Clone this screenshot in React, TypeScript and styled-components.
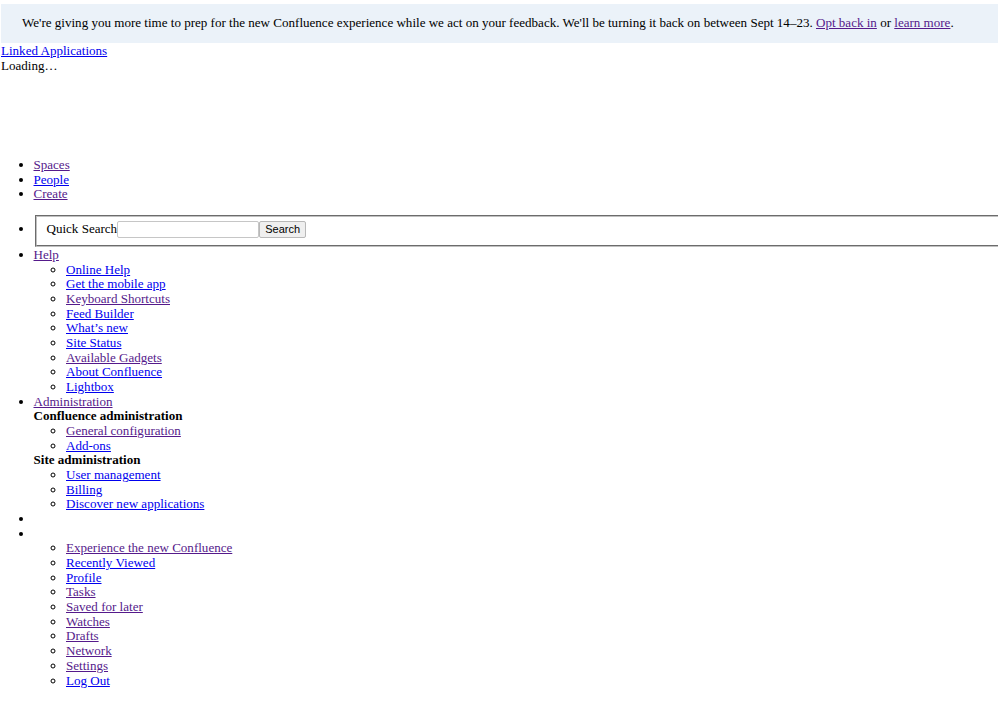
import { createGlobalStyle } from "styled-components";
import styled from "styled-components";

const GlobalStyle = createGlobalStyle`
  html, body {
    margin: 0;
    padding: 0;
    background: #fff;
    overflow-x: hidden;
  }
  body {
    padding-left: 1px;
    font-family: "Liberation Serif", "Times New Roman", serif;
    font-size: 13.05px;
    line-height: 14.67px;
    color: #000;
  }
`;

const Banner = styled.div`
  margin-top: 4px;
  height: 39px;
  padding-left: 21px;
  display: flex;
  align-items: center;
  background: #ebf2f9;
  white-space: nowrap;
`;

const Link = styled.a<{ $visited?: boolean }>`
  color: ${(p) => (p.$visited ? "#551a8b" : "#0000ee")};
  text-decoration: underline;
`;

const AppSwitcher = styled.div`
  margin-top: 1px;
  height: 114px;
`;

const List = styled.ul`
  margin: 0;
  padding: 0 0 0 32.5px;
  list-style: disc;
`;

const SubList = styled.ul`
  margin: 0;
  padding: 0 0 0 32.5px;
  list-style: circle;
`;

const SearchItem = styled.li`
  margin: 13px 0 1px;
`;

const SearchBox = styled.form`
  box-sizing: border-box;
  width: 980px;
  height: 32px;
  margin-left: 1px;
  padding: 0 0 4px 10px;
  display: flex;
  align-items: center;
  border: 2px groove #c0c0c0;
  border-right: 0;
`;

const SearchInput = styled.input`
  box-sizing: border-box;
  width: 142px;
  height: 17px;
  padding: 1px 2px;
  border: 1px solid #c6c6c6;
  border-radius: 2px;
  background: #fff;
`;

const SearchButton = styled.button`
  box-sizing: border-box;
  width: 47px;
  height: 17px;
  padding: 0;
  border: 1px solid #b8b8b8;
  border-radius: 2px;
  background: #efefef;
  color: #000;
  font-family: "Liberation Sans", Arial, sans-serif;
  font-size: 11px;
`;

const SectionTitle = styled.strong`
  display: block;
  font-weight: 700;
`;

type Item = { label: string; visited?: boolean };

const topLinks: Item[] = [
  { label: "Spaces", visited: true },
  { label: "People" },
  { label: "Create", visited: true },
];

const helpLinks: Item[] = [
  { label: "Online Help" },
  { label: "Get the mobile app" },
  { label: "Keyboard Shortcuts", visited: true },
  { label: "Feed Builder" },
  { label: "What’s new" },
  { label: "Site Status" },
  { label: "Available Gadgets", visited: true },
  { label: "About Confluence" },
  { label: "Lightbox" },
];

const confluenceAdmin: Item[] = [
  { label: "General configuration", visited: true },
  { label: "Add-ons" },
];

const siteAdmin: Item[] = [
  { label: "User management" },
  { label: "Billing" },
  { label: "Discover new applications" },
];

const userLinks: Item[] = [
  { label: "Experience the new Confluence", visited: true },
  { label: "Recently Viewed" },
  { label: "Profile" },
  { label: "Tasks", visited: true },
  { label: "Saved for later", visited: true },
  { label: "Watches", visited: true },
  { label: "Drafts", visited: true },
  { label: "Network", visited: true },
  { label: "Settings", visited: true },
  { label: "Log Out" },
];

const LinkItems = ({ items }: { items: Item[] }) => (
  <>
    {items.map((item) => (
      <li key={item.label}>
        <Link href="#" $visited={item.visited}>
          {item.label}
        </Link>
      </li>
    ))}
  </>
);

const App = () => {
  return (
    <>
      <GlobalStyle />
      <Banner>
        <span>
          We're giving you more time to prep for the new Confluence experience
          while we act on your feedback. We'll be turning it back on between
          Sept 14–23.{" "}
          <Link href="#" $visited>
            Opt back in
          </Link>{" "}
          or{" "}
          <Link href="#" $visited>
            learn more
          </Link>
          .
        </span>
      </Banner>
      <AppSwitcher>
        <Link href="#">Linked Applications</Link>
        <div>Loading…</div>
      </AppSwitcher>
      <List>
        <LinkItems items={topLinks} />
      </List>
      <List>
        <SearchItem>
          <SearchBox onSubmit={(e) => e.preventDefault()}>
            <label htmlFor="quick-search">Quick Search</label>
            <SearchInput id="quick-search" type="text" />
            <SearchButton type="submit">Search</SearchButton>
          </SearchBox>
        </SearchItem>
        <li>
          <Link href="#" $visited>
            Help
          </Link>
          <SubList>
            <LinkItems items={helpLinks} />
          </SubList>
        </li>
        <li>
          <Link href="#" $visited>
            Administration
          </Link>
          <SectionTitle>Confluence administration</SectionTitle>
          <SubList>
            <LinkItems items={confluenceAdmin} />
          </SubList>
          <SectionTitle>Site administration</SectionTitle>
          <SubList>
            <LinkItems items={siteAdmin} />
          </SubList>
        </li>
        <li>&nbsp;</li>
        <li>
          &nbsp;
          <SubList>
            <LinkItems items={userLinks} />
          </SubList>
        </li>
      </List>
    </>
  );
};

export default App;
